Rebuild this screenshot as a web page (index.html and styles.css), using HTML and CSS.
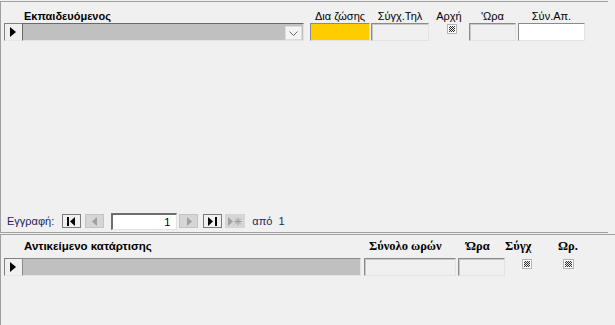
FILE: index.html
```html
<!DOCTYPE html>
<html lang="el">
<head>
<meta charset="utf-8">
<link rel="stylesheet" href="styles.css">
</head>
<body>
<div class="form">
  <section class="sub sub-top">
    <div class="grid top-grid labels">
      <span></span>
      <span class="lbl bold left">Εκπαιδευόμενος</span>
      <span></span>
      <span class="lbl">Δια ζώσης</span>
      <span></span>
      <span class="lbl">Σύγχ.Τηλ</span>
      <span class="lbl">Αρχή</span>
      <span class="lbl">'Ωρα</span>
      <span></span>
      <span class="lbl">Σύν.Απ.</span>
    </div>
    <div class="grid top-grid fields">
      <div class="selector"><svg width="6" height="10" viewBox="0 0 6 10"><path d="M0 0 L6 5 L0 10 Z" fill="#000"/></svg></div>
      <div class="field combo">
        <span class="drop"><svg width="9" height="5" viewBox="0 0 9 5"><path d="M0.5 0.5 L4.5 4.5 L8.5 0.5" fill="none" stroke="#6d6d6d" stroke-width="1"/></svg></span>
      </div>
      <span></span>
      <div class="field yellow"></div>
      <span></span>
      <div class="field"></div>
      <div class="chk-cell"><span class="chk"></span></div>
      <div class="field"></div>
      <span></span>
      <div class="field white"></div>
    </div>
    <div class="fill"></div>
    <div class="nav">
      <span class="nav-lbl">Εγγραφή:</span>
      <span class="nbtn first"><svg width="9" height="9" viewBox="0 0 9 9"><rect x="0" y="0" width="2" height="9" fill="#000"/><path d="M8 0 L3 4.5 L8 9 Z" fill="#000"/></svg></span>
      <span class="nbtn off prev"><svg width="6" height="9" viewBox="0 0 6 9"><path d="M5 0 L0 4.5 L5 9 Z" fill="#a0a0a0"/></svg></span>
      <span class="nbox">1</span>
      <span class="nbtn off next"><svg width="6" height="9" viewBox="0 0 6 9"><path d="M1 0 L6 4.5 L1 9 Z" fill="#a0a0a0"/></svg></span>
      <span class="nbtn last"><svg width="9" height="9" viewBox="0 0 9 9"><path d="M0 0 L5 4.5 L0 9 Z" fill="#000"/><rect x="7" y="0" width="2" height="9" fill="#000"/></svg></span>
      <span class="nbtn off new"><svg width="14" height="9" viewBox="0 0 14 9"><path d="M0 0 L5 4.5 L0 9 Z" fill="#a0a0a0"/><path d="M10 0.5 V8.5 M6 4.5 H14 M7.2 1.7 L12.8 7.3 M12.8 1.7 L7.2 7.3" stroke="#a0a0a0" stroke-width="1"/></svg></span>
      <span class="nav-of">από&nbsp; 1</span>
    </div>
  </section>
  <section class="sub sub-bottom">
    <div class="grid bot-grid labels2">
      <span></span>
      <span class="lbl2 sans">Αντικείμενο κατάρτισης</span>
      <span></span>
      <span class="lbl2 serif l-total">Σύνολο ωρών</span>
      <span></span>
      <span class="lbl2 serif l-hour">Ώρα</span>
      <span class="lbl2 serif">Σύγχ</span>
      <span class="lbl2 serif l-or">Ωρ.</span>
    </div>
    <div class="grid bot-grid fields2">
      <div class="selector"><svg width="6" height="10" viewBox="0 0 6 10"><path d="M0 0 L6 5 L0 10 Z" fill="#000"/></svg></div>
      <div class="field gray"></div>
      <span></span>
      <div class="field"></div>
      <span></span>
      <div class="field"></div>
      <div class="chk-cell c1"><span class="chk"></span></div>
      <div class="chk-cell c2"><span class="chk"></span></div>
    </div>
  </section>
</div>
</body>
</html>
```
FILE: styles.css
```css
* { box-sizing: border-box; }
html, body {
  margin: 0;
  padding: 0;
  background: #f0f0f0;
  width: 615px;
  height: 325px;
  overflow: hidden;
  font-family: "Liberation Sans", Arial, sans-serif;
  font-size: 11px;
  color: #000;
}
.form {
  display: flex;
  flex-direction: column;
  height: 325px;
}
.sub {
  border-left: 1px solid #a0a0a0;
}
.sub-top {
  margin-top: 1px;
  margin-right: 7px;
  height: 232px;
  border-top: 1px solid #a0a0a0;
  border-bottom: 1px solid #a0a0a0;
  display: flex;
  flex-direction: column;
}
.sub-bottom {
  margin-top: 1px;
  flex: 1;
  border-top: 1px solid #a0a0a0;
}
.grid {
  display: grid;
  padding-left: 3px;
}
.top-grid {
  grid-template-columns: 18px 282px 6px 60px 1px 58px 40px 47px 2px 67px;
}
.bot-grid {
  grid-template-columns: 18px 339px 3px 92px 2px 47px 45px 40px;
}
.labels {
  margin-top: 7px;
  height: 14px;
  line-height: 14px;
}
.lbl {
  text-align: center;
  white-space: nowrap;
}
.lbl.left { text-align: left; padding-left: 2px; }
.bold { font-weight: bold; }
.fields {
  height: 18px;
}
.selector {
  height: 18px;
  border-left: 1px solid #808080;
  border-top: 1px solid #808080;
  border-bottom: 1px solid #e8e8e8;
  background: #f0f0f0;
  display: flex;
  align-items: center;
  padding-left: 5px;
}
.field {
  height: 18px;
  background: #f0f0f0;
  border: 1px solid;
  border-color: #8a8a8a #e3e3e3 #e3e3e3 #8a8a8a;
  box-shadow: inset 1px 1px 0 #c8c8c8;
}
.combo {
  background: #c0c0c0;
  border-color: #6a6a6a #e3e3e3 #e3e3e3 #6a6a6a;
  box-shadow: none;
  display: flex;
  justify-content: flex-end;
  align-items: center;
  padding-right: 1px;
}
.drop {
  width: 17px;
  height: 14px;
  margin-top: 2px;
  background: #f4f4f4;
  border: 1px solid #dcdcdc;
  display: flex;
  align-items: center;
  justify-content: center;
}
.yellow {
  background: #ffcc00;
  box-shadow: none;
}
.white {
  background: #fff;
  box-shadow: none;
}
.gray {
  background: #c0c0c0;
  box-shadow: none;
}
.chk-cell {
  display: flex;
  justify-content: center;
  align-items: flex-start;
}
.top-grid .chk-cell { padding-top: 1px; padding-left: 6px; }
.chk {
  display: block;
  width: 10px;
  height: 10px;
  border: 1px solid #b4b4b4;
  background:
    repeating-conic-gradient(#303030 0 25%, #f0f0f0 0 50%) 0 0 / 2px 2px content-box,
    #fff;
  padding: 1px;
}
.fill { flex: 1; }
.nav {
  display: flex;
  align-items: center;
  height: 16px;
  margin-bottom: 3px;
  padding-left: 6px;
  font-size: 11px;
}
.nav-lbl {
  color: #1e1e5a;
  margin-right: 8px;
}
.nbtn {
  width: 19px;
  height: 14px;
  border: 1px solid #7a7a7a;
  background: #f0f0f0;
  display: flex;
  align-items: center;
  justify-content: center;
  margin-right: 4px;
}
.nbtn.off {
  border-color: #c4c4c4;
  background: #d6d6d6;
}
.nbtn.next { margin-right: 5px; }
.nbtn.last { margin-right: 3px; }
.nbtn.new {
  width: 20px;
  border: none;
  background: #d6d6d6;
  margin-right: 7px;
}
.nbtn.prev { margin-right: 7px; }
.nbox {
  width: 66px;
  height: 17px;
  background: #fff;
  border-top: 2px solid #6e6e6e;
  border-left: 2px solid #6e6e6e;
  border-right: 1px solid #e3e3e3;
  border-bottom: 1px solid #e3e3e3;
  text-align: right;
  padding-right: 6px;
  line-height: 14px;
  margin-right: 2px;
}
.nav-of { color: #1e1e5a; }
.labels2 {
  margin-top: 4px;
  height: 15px;
  line-height: 15px;
}
.lbl2 {
  font-weight: bold;
  white-space: nowrap;
}
.sans {
  font-family: "Liberation Sans", Arial, sans-serif;
  font-size: 11.5px;
  padding-left: 2px;
}
.serif {
  font-family: "Liberation Serif", "Times New Roman", serif;
  font-size: 12.5px;
}
.l-total { padding-left: 5px; }
.l-hour { padding-left: 8px; }
.l-or { padding-left: 8px; }
.fields2 {
  margin-top: 4px;
  height: 18px;
}
.c1 { justify-content: flex-start; padding-left: 17px; padding-top: 1px; }
.c2 { justify-content: flex-start; padding-left: 13px; padding-top: 1px; }
.c2 .chk { width: 11px; }
```
